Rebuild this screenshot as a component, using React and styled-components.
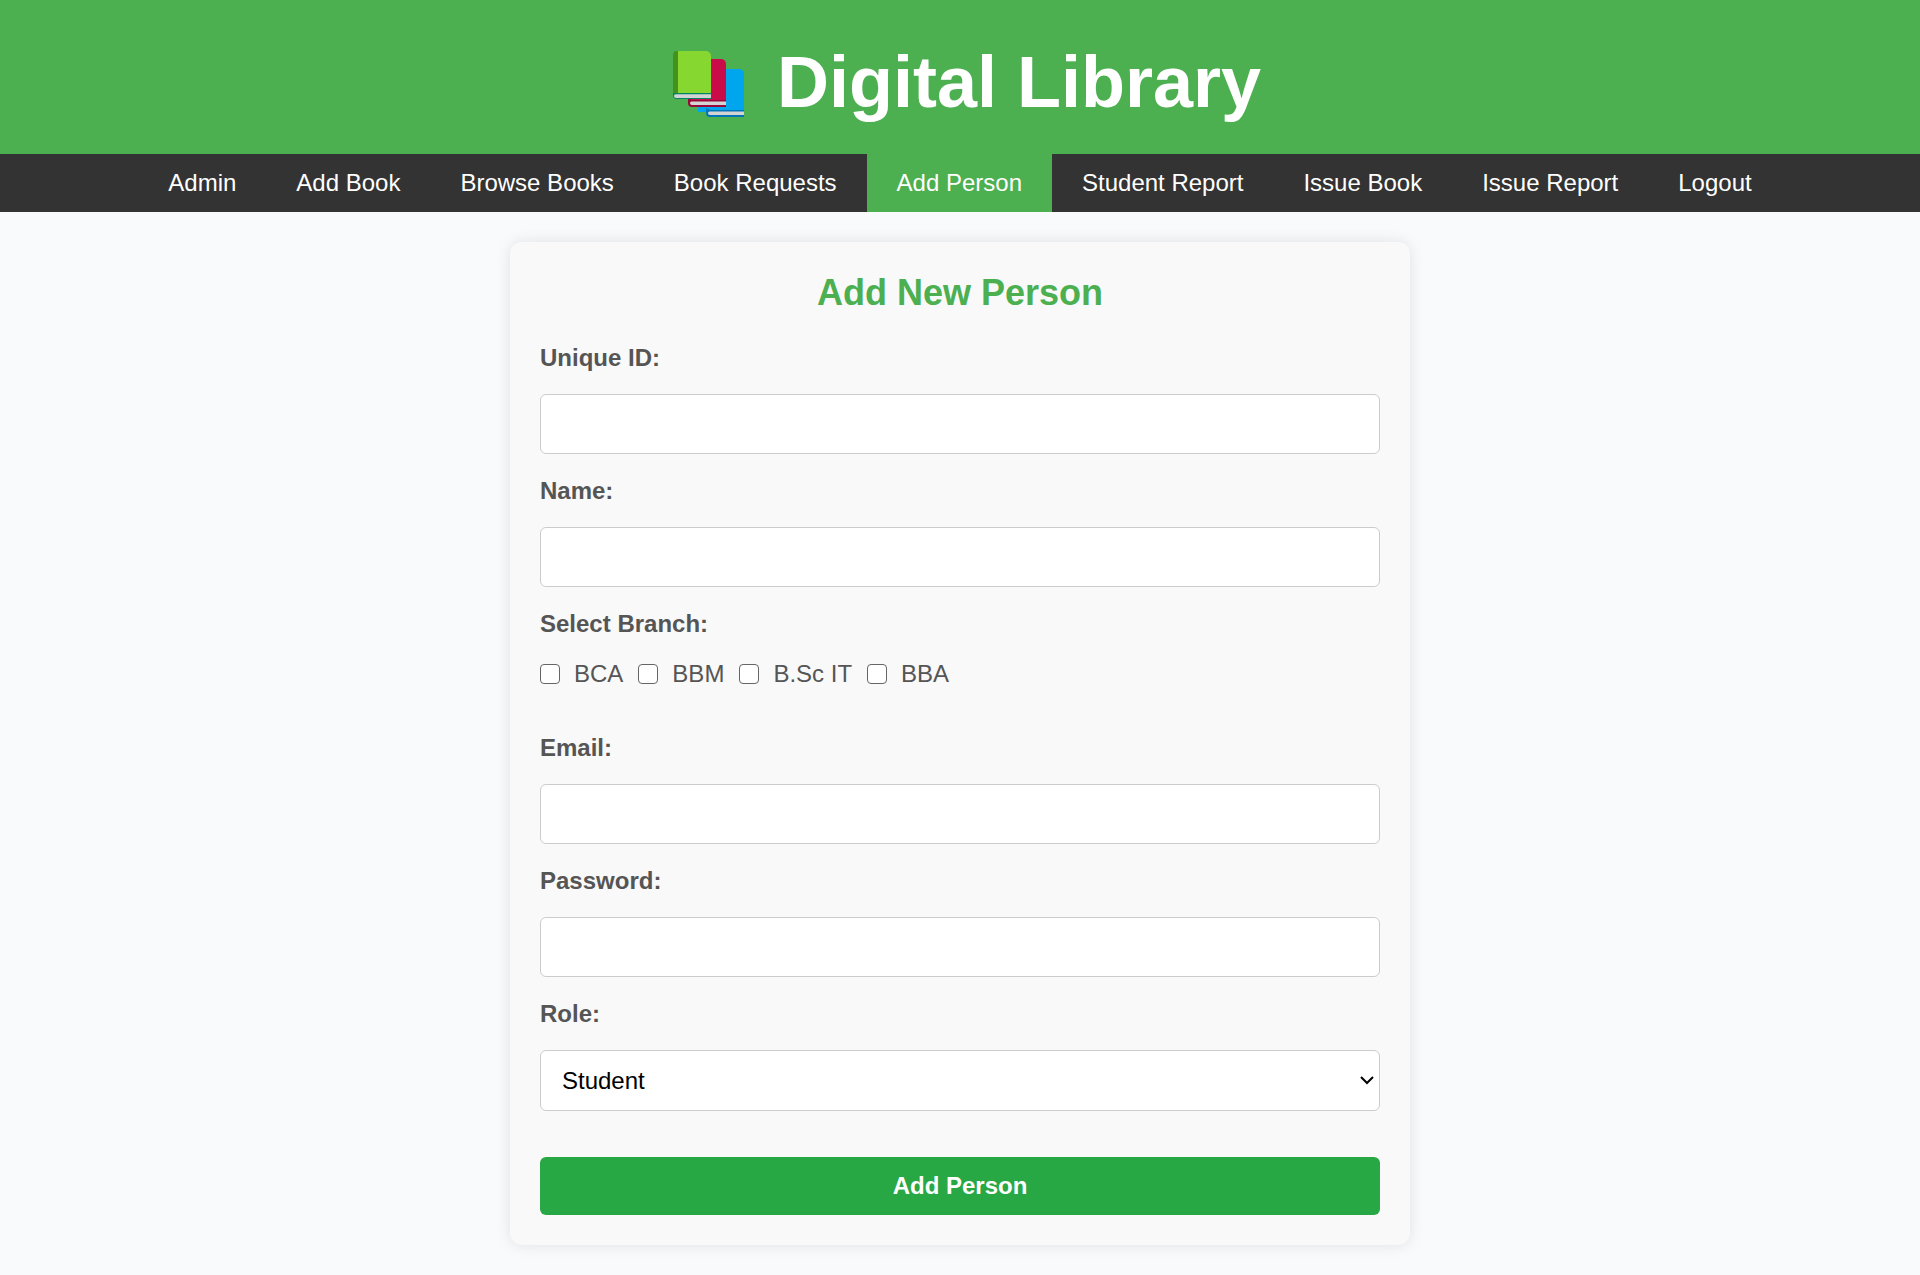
import React, { useState } from "react";
import styled, { createGlobalStyle } from "styled-components";

const GlobalStyle = createGlobalStyle`
  *, *::before, *::after { box-sizing: border-box; }
  body {
    margin: 0;
    background: #f8fafc;
    color: #555;
    font-family: "Liberation Sans", Arial, Helvetica, sans-serif;
    font-size: 24px;
    line-height: 27px;
  }
`;

const Header = styled.header`
  display: flex;
  justify-content: center;
  align-items: center;
  gap: 22px;
  padding: 40px 30px 30px;
  background: #4caf50;
  color: #fff;
`;

const Title = styled.h1`
  margin: 0;
  font-size: 72px;
  line-height: 84px;
  font-weight: bold;
`;

const Logo = styled.svg`
  width: 96px;
  height: 84px;
`;

const Nav = styled.nav`
  display: flex;
  flex-wrap: wrap;
  justify-content: center;
  background: #333;
`;

const NavLink = styled.a`
  padding: 15px 30px;
  line-height: 28px;
  color: #fff;
  text-decoration: none;
  background: ${(p) => (p.$active ? "#4caf50" : "transparent")};

  &:hover { background: #4caf50; }
`;

const Card = styled.main`
  max-width: 900px;
  margin: 30px auto;
  padding: 30px;
  background: #f9f9f9;
  border-radius: 12px;
  box-shadow: 0 0 15px rgba(0, 0, 0, 0.1);
`;

const CardTitle = styled.h2`
  margin: 0 0 31px;
  color: #4caf50;
  font-size: 36px;
  line-height: 41px;
  text-align: center;
`;

const Form = styled.form`
  display: flex;
  flex-direction: column;
  gap: 23px;
`;

const Field = styled.div`
  display: flex;
  flex-direction: column;
  gap: 23px;
`;

const Label = styled.label`
  font-weight: bold;
`;

const Input = styled.input`
  width: 100%;
  height: 60px;
  padding: 15px;
  border: 1px solid #ccc;
  border-radius: 6px;
  background: #fff;
  font: inherit;
`;

const BranchGroup = styled.fieldset`
  min-width: 0;
  margin: 0 0 23px;
  padding: 0;
  border: 0;
`;

const BranchLegend = styled.legend`
  margin-bottom: 23px;
  padding: 0;
  font-weight: bold;
`;

const Options = styled.div`
  display: flex;
  flex-wrap: wrap;
  gap: 15px;
`;

const Option = styled.label`
  display: flex;
  align-items: center;
  gap: 14px;
  line-height: 28px;
`;

const Checkbox = styled.input`
  appearance: none;
  width: 20px;
  height: 20px;
  margin: 0;
  border: 1px solid #666;
  border-radius: 4px;
  background: #fff;

  &:checked {
    border-color: #28a745;
    background: #28a745;
    box-shadow: inset 0 0 0 3px #fff;
  }
`;

const SelectBox = styled.div`
  display: grid;
  align-items: center;

  > * { grid-area: 1 / 1; }
`;

const Select = styled.select`
  appearance: none;
  width: 100%;
  height: 61px;
  padding: 0 36px 0 21px;
  border: 1px solid #ccc;
  border-radius: 6px;
  background: #fff;
  color: #000;
  font: inherit;
`;

const Chevron = styled.svg`
  justify-self: end;
  width: 14px;
  height: 9px;
  margin-right: 6px;
  pointer-events: none;
`;

const Submit = styled.button`
  margin-top: 23px;
  padding: 15px;
  border: 0;
  border-radius: 6px;
  background: #28a745;
  color: #fff;
  font: inherit;
  font-weight: bold;
  line-height: 28px;
  cursor: pointer;
`;

const LINKS = [
  "Admin",
  "Add Book",
  "Browse Books",
  "Book Requests",
  "Add Person",
  "Student Report",
  "Issue Book",
  "Issue Report",
  "Logout",
];

const BRANCHES = ["BCA", "BBM", "B.Sc IT", "BBA"];

function Books() {
  return (
    <Logo viewBox="-1 0 96 84" aria-hidden="true">
      <path d="M38 29h41a5 5 0 0 1 5 5v38H38z" fill="#00a6ed" />
      <path d="M84 77H50a4 4 0 0 1-4-4v-5l4 2h34z" fill="#0074ba" />
      <path d="M84 75H50a2 2 0 0 1-2-2 1.500 1.500 0 0 1 1.500-1.500H84z" fill="#d3d3d3" />
      <path d="M28 19h33a5 5 0 0 1 5 5v37H28z" fill="#ca0b4a" />
      <path d="M66 67H32a4 4 0 0 1-4-4v-5l4 2h34z" fill="#990838" />
      <path d="M66 65H32a2 2 0 0 1-2-2 1.500 1.500 0 0 1 1.500-1.500H66z" fill="#d3d3d3" />
      <path d="M16 11h30a5 5 0 0 1 5 5v38H16z" fill="#86d72f" />
      <path d="M16 11h2v42h-5V15a4 4 0 0 1 3-4z" fill="#44911b" />
      <path d="M51 59H17a4 4 0 0 1-4-4v-2h38z" fill="#008463" />
      <path d="M51 58H16a2 2 0 0 1-2-2 1.800 1.800 0 0 1 2-1.800h35z" fill="#d3d3d3" />
    </Logo>
  );
}

function TextField({ id, label, type = "text" }) {
  return (
    <Field>
      <Label htmlFor={id}>{label}</Label>
      <Input id={id} name={id} type={type} />
    </Field>
  );
}

export default function App() {
  const [role, setRole] = useState("student");

  return (
    <>
      <GlobalStyle />
      <Header>
        <Books />
        <Title>Digital Library</Title>
      </Header>
      <Nav>
        {LINKS.map((name) => (
          <NavLink key={name} href="#" $active={name === "Add Person"}>
            {name}
          </NavLink>
        ))}
      </Nav>
      <Card>
        <CardTitle>Add New Person</CardTitle>
        <Form onSubmit={(e) => e.preventDefault()}>
          <TextField id="unique-id" label="Unique ID:" />
          <TextField id="name" label="Name:" />
          <BranchGroup>
            <BranchLegend>Select Branch:</BranchLegend>
            <Options>
              {BRANCHES.map((branch) => (
                <Option key={branch}>
                  <Checkbox type="checkbox" name="branch" value={branch} />
                  {branch}
                </Option>
              ))}
            </Options>
          </BranchGroup>
          <TextField id="email" label="Email:" type="email" />
          <TextField id="password" label="Password:" type="password" />
          <Field>
            <Label htmlFor="role">Role:</Label>
            <SelectBox>
              <Select id="role" value={role} onChange={(e) => setRole(e.target.value)}>
                <option value="student">Student</option>
              </Select>
              <Chevron viewBox="0 0 14 9" aria-hidden="true">
                <path d="M1 1l6 6 6-6" fill="none" stroke="#000" strokeWidth="2" />
              </Chevron>
            </SelectBox>
          </Field>
          <Submit type="submit">Add Person</Submit>
        </Form>
      </Card>
    </>
  );
}
